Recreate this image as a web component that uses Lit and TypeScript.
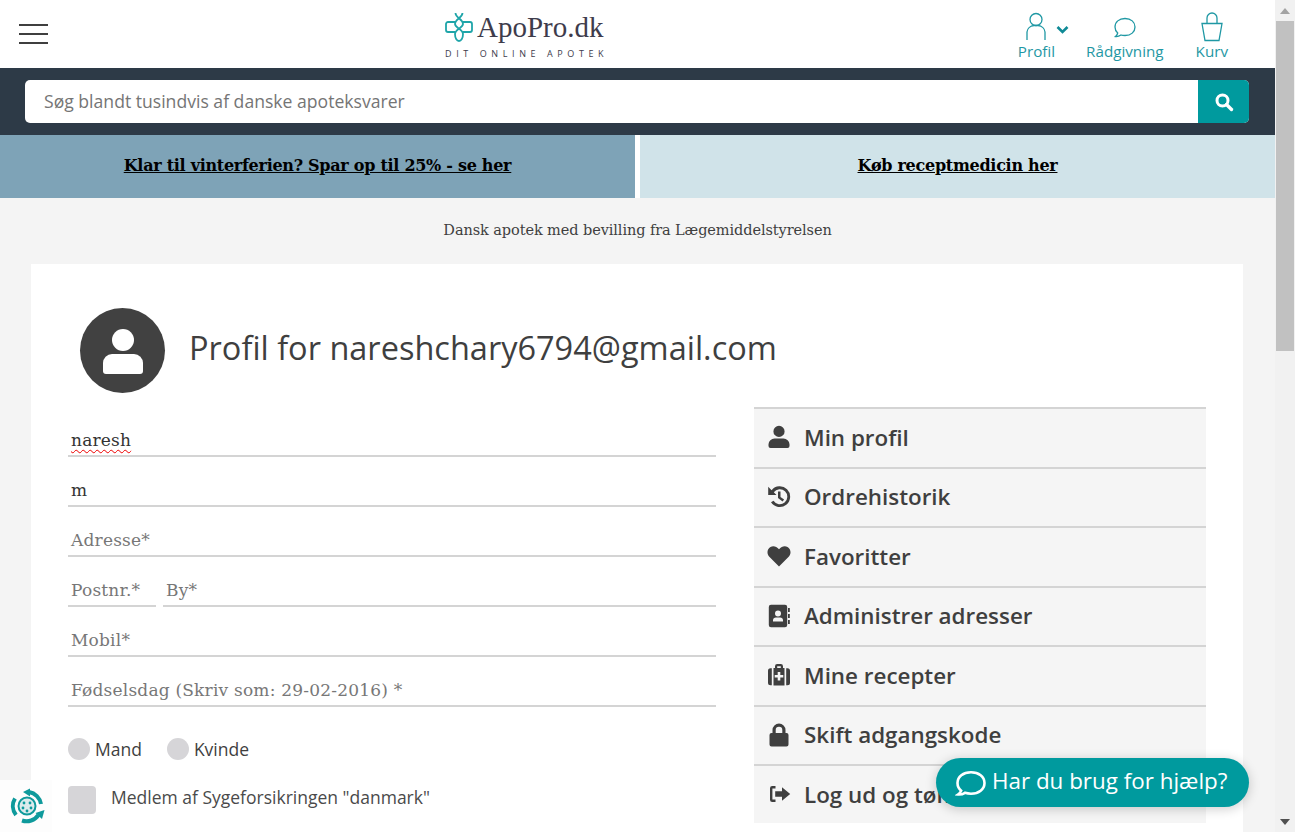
import { LitElement, html, css, svg } from "lit";
import { customElement } from "lit/decorators.js";

const menu = [
  { label: "Min profil", icon: svg`<path d="M12 12a5.600 5.600 0 1 0 0-11.200a5.600 5.600 0 0 0 0 11.200zM7.500 13.500h9a6 6 0 0 1 6 5.700v1.800a2 2 0 0 1-2 2h-17a2 2 0 0 1-2-2v-1.800a6 6 0 0 1 6-5.700z"/>` },
  { label: "Ordrehistorik", icon: svg`<path d="M4.600 5.200A10.400 10.400 0 1 1 4 17.300l2.500-1.500a7.500 7.500 0 1 0 .3-8.500l2.700 2.700H1.200V1.800z"/><path d="M11 6.500h2.500v5.400l3.600 2.600-1.500 2-4.600-3.400z"/>` },
  { label: "Favoritter", icon: svg`<path d="M12 22.500 2.300 12.700C-.6 9.700.1 4.800 3.500 3c2.800-1.500 6-.6 8.500 2.300C14.500 2.400 17.700 1.500 20.500 3c3.400 1.800 4.100 6.700 1.200 9.700z"/>` },
  { label: "Administrer adresser", icon: svg`<path fill-rule="evenodd" d="M4 .8h14a2.200 2.200 0 0 1 2.200 2.200v18a2.200 2.200 0 0 1-2.200 2.200H4A2.200 2.200 0 0 1 1.800 21V3A2.200 2.200 0 0 1 4 .8zm7 5.700a3 3 0 1 0 0 6 3 3 0 0 0 0-6zM6 17.500h10v-1.200a3 3 0 0 0-3-2.800H9a3 3 0 0 0-3 2.800z"/><path d="M21 4h1.800v4H21zM21 10h1.800v4H21zM21 16h1.800v4H21z"/>` },
  { label: "Mine recepter", icon: svg`<path fill-rule="evenodd" d="M8 5V3.200A2.200 2.200 0 0 1 10.200 1h3.600A2.200 2.200 0 0 1 16 3.200V5h1.500v17.500h-11V5zm2.200 0h3.600V3.200h-3.600zM10.700 9v3h-3v2.500h3v3h2.600v-3h3V12h-3V9z"/><path d="M4.800 5.300v17h-1.300A2.500 2.500 0 0 1 1 19.800V7.800a2.500 2.500 0 0 1 2.500-2.500zM19.200 5.300h1.300A2.500 2.500 0 0 1 23 7.800v12a2.500 2.500 0 0 1-2.500 2.500h-1.300z"/>` },
  { label: "Skift adgangskode", icon: svg`<path fill-rule="evenodd" d="M5.500 10V7a6.500 6.500 0 0 1 13 0v3h1a2 2 0 0 1 2 2v9.500a2 2 0 0 1-2 2h-15a2 2 0 0 1-2-2V12a2 2 0 0 1 2-2zm3.200 0h6.600V7a3.300 3.300 0 0 0-6.600 0z"/>` },
  { label: "Log ud og tøm kurv", icon: svg`<path d="M8.500 4H5.200A2.200 2.200 0 0 0 3 6.200v11.600A2.200 2.200 0 0 0 5.200 20h3.300v-2.400H5.400V6.400h3.100z"/><path d="M15 5.200 23.200 12 15 18.800v-4H8.200V9.200H15z"/>` },
];

@customElement("app-root")
export class AppRoot extends LitElement {
  static styles = css`
    :host {
      display: flex;
      position: relative;
      height: 832px;
      overflow: hidden;
      background: #fff;
      font-family: "Open Sans", sans-serif;
      color: #3f3f3f;
    }
    .page {
      flex: 1;
      min-width: 0;
      background: #f4f4f4;
      display: flex;
      flex-direction: column;
    }

    /* top bar */
    .top {
      flex: none;
      height: 68px;
      background: #fff;
      display: grid;
      grid-template-columns: 426px auto 1fr;
      align-items: center;
      padding: 0 47px 0 19px;
    }
    .burger {
      width: 29px;
      display: flex;
      flex-direction: column;
      gap: 7px;
    }
    .burger i {
      display: block;
      height: 2px;
      background: #3f3f3f;
    }
    .logo {
      width: 162px;
      padding-top: 2px;
      color: #3e3c4c;
    }
    .logo-main {
      display: flex;
      align-items: center;
      gap: 4px;
      height: 30px;
    }
    .logo-main svg {
      width: 28px;
      height: 30px;
    }
    .logo-name {
      font-family: "Liberation Serif", serif;
      font-size: 29px;
      line-height: 30px;
      white-space: nowrap;
    }
    .logo-sub {
      margin-top: 6px;
      font-size: 9px;
      line-height: 11px;
      letter-spacing: 4.6px;
      white-space: nowrap;
    }
    .tools {
      justify-self: end;
      display: flex;
      gap: 32px;
      color: #1f98a4;
      font-size: 15.2px;
    }
    .tool {
      display: flex;
      flex-direction: column;
      align-items: center;
      height: 68px;
      line-height: 20px;
    }
    .tool:first-child {
      margin-right: -1px;
    }
    .tool svg.ico {
      width: 30px;
      height: 30px;
      margin-top: 12px;
      fill: none;
      stroke: #1f98a4;
      stroke-width: 1.3;
    }
    .tool span {
      margin-top: -1px;
    }
    .tool-icon {
      position: relative;
      display: flex;
      justify-content: center;
      width: 30px;
    }
    .chev {
      position: absolute;
      left: 35px;
      top: 25px;
      width: 13px;
      height: 10px;
      fill: none;
      stroke: #0f8a96;
      stroke-width: 2.6;
    }

    /* search */
    .search {
      flex: none;
      height: 67px;
      box-sizing: border-box;
      background: #2d3a47;
      padding: 12px 26px 12px 25px;
    }
    .search-box {
      height: 43px;
      display: flex;
      background: #fff;
      border-radius: 5px;
      overflow: hidden;
    }
    .search-text {
      flex: 1;
      padding-left: 19px;
      font-size: 17.6px;
      line-height: 43px;
      color: #757575;
    }
    .search-btn {
      width: 51px;
      background: #009a9e;
      display: flex;
      align-items: center;
      justify-content: center;
    }
    .search-btn svg {
      width: 20px;
      height: 20px;
      fill: none;
      stroke: #fff;
    }

    /* promo strip */
    .promos {
      flex: none;
      height: 63px;
      display: grid;
      grid-template-columns: 635px 635px;
      gap: 5px;
      background: #fff;
    }
    .promo {
      display: flex;
      align-items: center;
      justify-content: center;
      padding-bottom: 2px;
      box-sizing: border-box;
      font-family: "DejaVu Serif", serif;
      font-size: 16px;
      letter-spacing: -0.28px;
      font-weight: 700;
      color: #000;
      text-decoration: underline;
    }
    .promo.dark {
      background: #7ea3b7;
    }
    .promo.light {
      background: #d0e3e9;
    }
    .licence {
      flex: none;
      height: 66px;
      display: flex;
      align-items: center;
      justify-content: center;
      padding-bottom: 3px;
      box-sizing: border-box;
      font-family: "DejaVu Serif", serif;
      font-size: 14.5px;
      letter-spacing: -0.09px;
      color: #3f3f3f;
    }

    /* profile card */
    .card {
      flex: 1;
      min-height: 0;
      margin: 0 32px 0 31px;
      background: #fff;
      padding: 44px 37px 0;
    }
    .head {
      display: flex;
      align-items: center;
      gap: 24px;
      padding-left: 12px;
    }
    .avatar {
      width: 85px;
      height: 85px;
      border-radius: 50%;
      background: #414141;
      display: flex;
      align-items: center;
      justify-content: center;
    }
    .avatar svg {
      width: 40px;
      height: 46px;
      fill: #fff;
    }
    h1 {
      margin: -7px 0 0;
      font-size: 32.5px;
      font-weight: 400;
      color: #3f3f3f;
    }
    .cols {
      display: grid;
      grid-template-columns: 648px 452px;
      gap: 38px;
      margin-top: 14px;
    }

    /* form */
    .field {
      height: 50px;
      box-sizing: border-box;
      border-bottom: 2px solid #d4d4d4;
      display: flex;
      align-items: flex-end;
      padding: 0 0 3px 3px;
      font-family: "DejaVu Serif", serif;
      font-size: 17px;
      letter-spacing: 0.2px;
      line-height: 24px;
      color: #777;
    }
    .field.filled {
      color: #333;
    }
    .spell {
      text-decoration: underline wavy #e00;
      text-decoration-thickness: 1px;
      text-underline-offset: 3px;
    }
    .split {
      display: grid;
      grid-template-columns: 88px 1fr;
      gap: 7px;
    }
    .gender {
      display: flex;
      gap: 25px;
      margin-top: 31px;
      font-size: 17.5px;
      line-height: 22px;
    }
    .radio {
      display: flex;
      align-items: center;
      gap: 5px;
    }
    .radio i {
      width: 22px;
      height: 22px;
      border-radius: 50%;
      background: #d6d5d8;
    }
    .member {
      display: flex;
      align-items: center;
      gap: 15px;
      margin-top: 26px;
      font-size: 17.5px;
      color: #4a4a4a;
    }
    .member i {
      width: 28px;
      height: 28px;
      border-radius: 4px;
      background: #d6d5d8;
    }
    .member span {
      margin-top: -6px;
    }

    /* side menu */
    .menu {
      background: #f5f5f5;
      border-top: 2px solid #d4d4d4;
      align-self: start;
    }
    .item {
      height: 59.5px;
      box-sizing: border-box;
      display: flex;
      align-items: center;
      gap: 13px;
      padding: 0 0 1px 13px;
      border-bottom: 2px solid #d4d4d4;
      font-size: 22.4px;
      font-weight: 600;
      color: #3f3f3f;
      white-space: nowrap;
    }
    .item:last-child {
      height: 57px;
      border-bottom: 0;
    }
    .item svg {
      width: 24px;
      height: 24px;
      flex: none;
      fill: #3f3f3f;
    }

    /* overlays */
    .help {
      position: absolute;
      left: 936px;
      top: 758px;
      width: 313px;
      height: 49px;
      border-radius: 25px;
      background: #009a9e;
      box-shadow: 0 2px 12px rgba(0, 0, 0, 0.2);
      color: #fff;
      font-size: 22.4px;
      display: flex;
      align-items: center;
      gap: 5px;
      padding: 0 0 5px 19px;
      box-sizing: border-box;
      white-space: nowrap;
    }
    .help svg {
      width: 32px;
      height: 28px;
      margin-top: 5px;
      fill: none;
      stroke: #fff;
      stroke-width: 2.6;
    }
    .badge {
      position: absolute;
      left: 0;
      top: 780px;
      width: 52px;
      height: 52px;
      background: #fdfdfd;
      display: flex;
      align-items: center;
      justify-content: center;
      padding-left: 2px;
      box-sizing: border-box;
    }
    .badge svg {
      width: 36px;
      height: 36px;
    }

    /* scrollbar */
    .scrollbar {
      width: 20px;
      flex: none;
      background: #f1f1f1;
      display: flex;
      flex-direction: column;
      align-items: center;
    }
    .arrow {
      height: 21px;
      width: 20px;
      display: flex;
      align-items: center;
      justify-content: center;
    }
    .arrow svg {
      width: 10px;
      height: 6px;
    }
    .thumb {
      width: 18px;
      height: 330px;
      background: #c1c1c1;
    }
    .rest {
      flex: 1;
    }
  `;

  render() {
    return html`
      <div class="page">
        <header class="top">
          <div class="burger"><i></i><i></i><i></i></div>
          <div class="logo">
            <div class="logo-main">
              <svg viewBox="0 0 28 30" fill="none" stroke="#1fa5a9" stroke-width="1.800">
                <path d="M10.500 10H3a2 2 0 0 0-2 2v6a2 2 0 0 0 2 2h7.500M17.500 10H25a2 2 0 0 1 2 2v6a2 2 0 0 1-2 2h-7.500" />
                <path d="M10.500 1c0 5 7.500 6 7.500 11 0 4-8 5-8 10 0 4 1.800 7 4 7s4-3 4-7c0-5-8-6-8-10 0-5 7.500-6 7.500-11" />
              </svg>
              <span class="logo-name">ApoPro.dk</span>
            </div>
            <div class="logo-sub">DIT ONLINE APOTEK</div>
          </div>
          <nav class="tools">
            <div class="tool">
              <div class="tool-icon">
                <svg class="ico" viewBox="0 0 30 30">
                  <circle cx="15" cy="7.500" r="6" />
                  <path d="M6 28v-8a8 7 0 0 1 7-6.500h4a8 7 0 0 1 7 6.500v8" />
                </svg>
                <svg class="chev" viewBox="0 0 13 10"><path d="M1.500 2 6.500 7l5-5" /></svg>
              </div>
              <span>Profil</span>
            </div>
            <div class="tool">
              <svg class="ico" viewBox="0 0 30 30">
                <path d="M5.500 24.500c2 .3 4-.5 5.500-1.500 1.200.4 2.500.5 4 .5 6 0 10-3.500 10-8.500S21 6.500 15 6.500 5 10 5 15c0 2.500 1 4.500 2.700 6-.3 1.400-1 2.600-2.200 3.500z" />
              </svg>
              <span>Rådgivning</span>
            </div>
            <div class="tool">
              <svg class="ico" viewBox="0 0 30 30">
                <path d="M10 11V6a5 5 0 0 1 10 0v5" />
                <path d="M5 11.500h20l-3 17H8z" />
              </svg>
              <span>Kurv</span>
            </div>
          </nav>
        </header>

        <div class="search">
          <div class="search-box">
            <div class="search-text">Søg blandt tusindvis af danske apoteksvarer</div>
            <div class="search-btn">
              <svg viewBox="0 0 20 20">
                <circle cx="8.500" cy="8.500" r="5.500" stroke-width="3" />
                <path d="M12.500 12.500 17.500 17.500" stroke-width="3.400" stroke-linecap="round" />
              </svg>
            </div>
          </div>
        </div>

        <div class="promos">
          <div class="promo dark">Klar til vinterferien? Spar op til 25% - se her</div>
          <div class="promo light">Køb receptmedicin her</div>
        </div>
        <div class="licence">Dansk apotek med bevilling fra Lægemiddelstyrelsen</div>

        <main class="card">
          <div class="head">
            <div class="avatar">
              <svg viewBox="0 0 40 46">
                <circle cx="20" cy="12" r="11" />
                <path d="M9 26h22a9 9 0 0 1 9 9v8a3 3 0 0 1-3 3H3a3 3 0 0 1-3-3v-8a9 9 0 0 1 9-9z" />
              </svg>
            </div>
            <h1>Profil for nareshchary6794@gmail.com</h1>
          </div>

          <div class="cols">
            <form>
              <div class="field filled"><span class="spell">naresh</span></div>
              <div class="field filled">m</div>
              <div class="field">Adresse*</div>
              <div class="split">
                <div class="field">Postnr.*</div>
                <div class="field">By*</div>
              </div>
              <div class="field">Mobil*</div>
              <div class="field">Fødselsdag (Skriv som: 29-02-2016) *</div>
              <div class="gender">
                <label class="radio"><i></i>Mand</label>
                <label class="radio"><i></i>Kvinde</label>
              </div>
              <label class="member"><i></i><span>Medlem af Sygeforsikringen "danmark"</span></label>
            </form>

            <aside class="menu">
              ${menu.map(
                (m) => html`<div class="item">
                  <svg viewBox="0 0 24 24">${m.icon}</svg>
                  <span>${m.label}</span>
                </div>`,
              )}
            </aside>
          </div>
        </main>
      </div>

      <div class="scrollbar">
        <div class="arrow">
          <svg viewBox="0 0 10 6"><path d="M5 0 10 6H0z" fill="#a3a3a3" /></svg>
        </div>
        <div class="thumb"></div>
        <div class="rest"></div>
        <div class="arrow">
          <svg viewBox="0 0 10 6"><path d="M0 0H10L5 6z" fill="#505050" /></svg>
        </div>
      </div>

      <div class="help">
        <svg viewBox="0 0 32 28">
          <path d="M3 25.500c2.500.2 5-.4 7-1.700 1.800.6 3.800.9 6 .9 7.800 0 13.500-4.500 13.500-10.700S23.800 3.300 16 3.300 2.500 7.800 2.500 14c0 3 1.400 5.800 3.700 7.700-.5 1.500-1.700 2.800-3.200 3.800z" />
        </svg>
        <span>Har du brug for hjælp?</span>
      </div>

      <div class="badge">
        <svg viewBox="0 0 36 36" fill="none">
          <circle cx="18" cy="18" r="8.500" fill="#dcebec" stroke="#0f9a9c" stroke-width="2" />
          <g fill="#0f9a9c">
            <circle cx="15" cy="15" r="1.400" />
            <circle cx="21" cy="15" r="1.400" />
            <circle cx="14" cy="20" r="1.400" />
            <circle cx="22" cy="20" r="1.400" />
            <circle cx="18" cy="23" r="1.400" />
            <path d="M14 4 21 .5v8z" />
            <path d="M35.500 22 26.500 25l6.500 6z" />
          </g>
          <path d="M6 10.500A14.500 14.500 0 0 0 7 27M20 4A14.500 14.500 0 0 1 32 16M13 32.500A14.500 14.500 0 0 0 29.500 27" stroke="#0f9a9c" stroke-width="4" />
        </svg>
      </div>
    `;
  }
}

declare global {
  interface HTMLElementTagNameMap {
    "app-root": AppRoot;
  }
}
